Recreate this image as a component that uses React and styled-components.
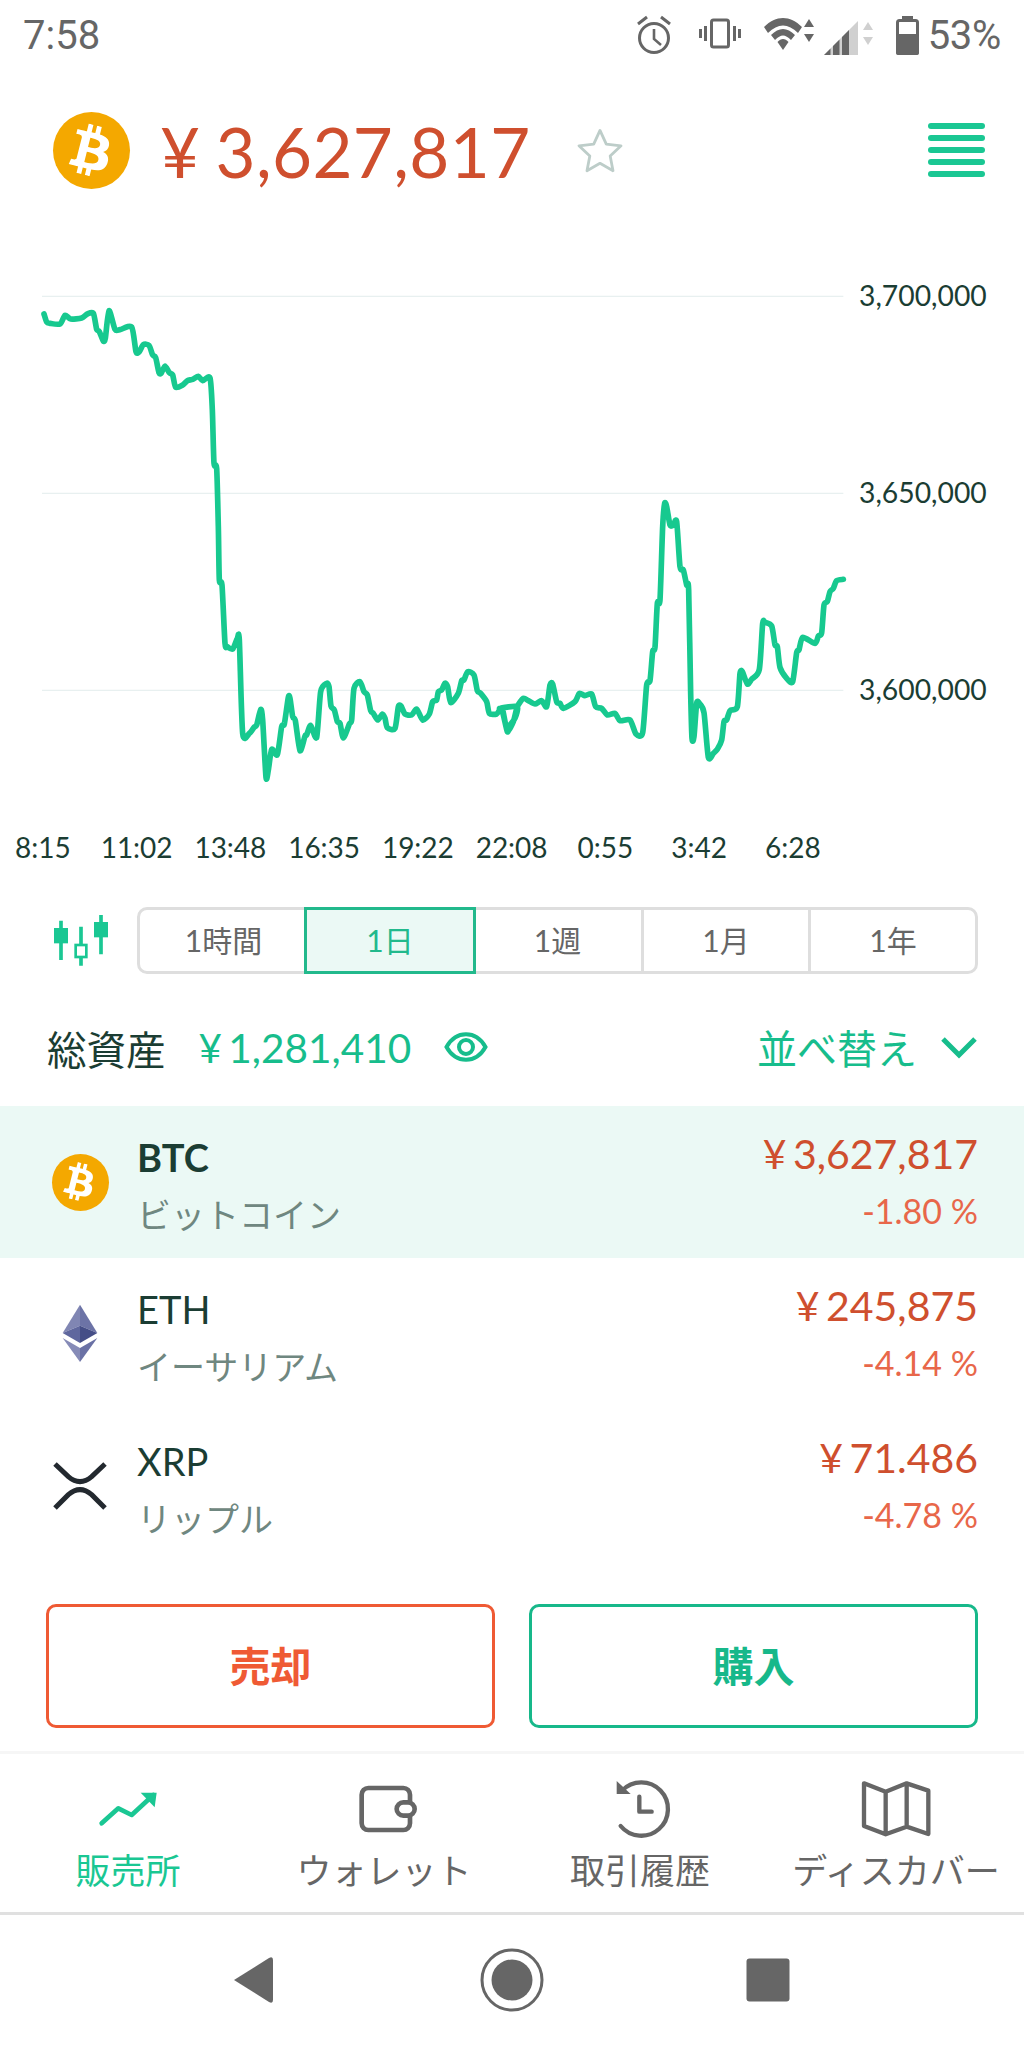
import React from 'react';
import styled, { createGlobalStyle } from 'styled-components';
import { FaBtc } from 'react-icons/fa';

const GREEN = '#1ac793';
const RED = '#cf4f2e';
const DARK = '#1b3d33';
const GREY = '#666666';
const CJK = `"Lato", "Noto Sans CJK JP", sans-serif`;

const Global = createGlobalStyle`
  html, body { margin: 0; padding: 0; background: #fff; }
  body { width: 1024px; height: 2048px; overflow: hidden; font-family: ${CJK}; color: ${DARK}; }
  * { box-sizing: border-box; }
`;

const Page = styled.div`width: 1024px; height: 2048px; display: flex; flex-direction: column;`;

const StatusBar = styled.div`height: 70px; display: flex; align-items: center; padding: 0 23px 0 23px; font-family: Roboto, sans-serif; color: ${GREY}; font-size: 40px;`;
const Clock = styled.span`margin-right: auto;`;
const StatusIcon = styled.svg`height: 50px; display: block; margin-top: -2px;`;
const StatusPct = styled.span`margin-left: 8px; letter-spacing: -0.3px;`;

const Header = styled.div`height: 160px; display: flex; align-items: center; padding: 0 39px 0 53px;`;
const BtcBadge = styled.span`
  width: ${p => p.$size}px; height: ${p => p.$size}px; border-radius: 50%; background: #f4a800; color: #fff;
  display: flex; align-items: center; justify-content: center; font-size: ${p => p.$size * 0.66}px; flex: none;
  svg { transform: rotate(14deg); }
`;
const HeadPrice = styled.div`margin: 3px 0 0 30px; font-size: 69px; color: ${RED}; line-height: 1; letter-spacing: 0.4px; word-spacing: -3px;`;
const Star = styled.svg`width: 52px; height: 52px; margin-left: 43px; margin-top: 2px;`;
const Burger = styled.div`margin-left: auto; width: 57px; display: flex; flex-direction: column; gap: 6px;`;
const BurgerBar = styled.span`height: 6px; border-radius: 3px; background: ${GREEN};`;

const ChartRow = styled.div`margin-top: 30px; height: 530px; display: flex;`;
const Plot = styled.svg`width: 848px; height: 530px; display: block; flex: none;`;
const YAxis = styled.div`margin-left: 11px; padding-top: 15px; display: flex; flex-direction: column; gap: 157px;`;
const YLabel = styled.div`height: 40px; line-height: 40px; font-size: 28.3px; color: ${DARK};`;

const Times = styled.div`margin: 37px 0 0 -4px; height: 40px; display: grid; grid-template-columns: repeat(9, 93.75px);`;
const Time = styled.div`text-align: center; line-height: 40px; font-size: 28px; color: ${DARK};`;

const RangeRow = styled.div`margin-top: 33px; height: 80px; display: flex; align-items: center; padding-left: 40px;`;
const Candle = styled.svg`width: 90px; height: 80px; flex: none;`;
const Segment = styled.div`margin-left: 7px; width: 841px; height: 67px; display: grid; grid-template-columns: repeat(5, 1fr); border: 3px solid #dedede; border-radius: 10px;`;
const Seg = styled.div`
  display: flex; align-items: center; justify-content: center; font-size: 30px; padding-bottom: 3px; color: ${p => p.$on ? '#22b98c' : GREY};
  background: ${p => p.$on ? '#ebf9f5' : 'transparent'};
  margin: ${p => p.$on ? '-3px -2px -3px -3px' : '0'};
  border: ${p => p.$on ? '3px solid #22b98c' : '0'};
  border-left: ${p => p.$on ? '3px solid #22b98c' : p.$first ? '0' : '3px solid #dedede'};
`;

const TotalRow = styled.div`margin-top: 37px; height: 60px; display: flex; align-items: center; padding: 0 46px 0 47px;`;
const TotalLabel = styled.div`font-size: 39.5px; color: ${DARK};`;
const TotalValue = styled.div`margin-left: 33px; font-size: 40.5px; color: #17bd8c; word-spacing: -4px;`;
const Eye = styled.svg`width: 44px; height: 40px; margin-left: 33px;`;
const Sort = styled.div`margin-left: auto; font-size: 40px; color: #17bd8c;`;
const Chevron = styled.svg`width: 38px; height: 24px; margin-left: 23px;`;

const List = styled.div`margin-top: 29px;`;
const Row = styled.div`height: 152px; display: flex; align-items: center; padding-right: 46px; background: ${p => p.$on ? '#ebf9f5' : '#fff'};`;
const IconCell = styled.div`width: 137px; padding-left: 40px; flex: none;`;
const IconBox = styled.div`width: 80px; display: flex; justify-content: center;`;
const CoinSvg = styled.svg`width: 80px; height: 80px; display: block;`;
const Names = styled.div`display: flex; flex-direction: column;`;
const Sym = styled.div`height: 58px; line-height: 58px; font-size: 38px; font-weight: ${p => p.$on ? 700 : 400}; color: ${DARK}; margin-top: 8px;`;
const Jp = styled.div`height: 58px; line-height: 58px; font-size: 34px; color: #6f8780;`;
const Prices = styled.div`margin-left: auto; text-align: right; display: flex; flex-direction: column;`;
const Price = styled.div`height: 58px; line-height: 58px; font-size: 41px; color: ${RED}; word-spacing: -4px;`;
const Pct = styled.div`height: 56px; line-height: 56px; font-size: 34px; color: #e8674a;`;

const Actions = styled.div`margin-top: 42px; display: grid; grid-template-columns: 449px 449px; gap: 34px; padding-left: 46px;`;
const Act = styled.div`
  height: 124px; border: 3px solid ${p => p.$c}; border-radius: 10px; color: ${p => p.$c};
  display: flex; align-items: center; justify-content: center; font-size: 41px; font-weight: 700; padding-bottom: 4px;
`;

const Tabs = styled.div`margin-top: 23px; height: 164px; border-top: 3px solid #f6f6f6; border-bottom: 3px solid #e0e0e0; display: grid; grid-template-columns: repeat(4, 256px);`;
const Tab = styled.div`display: flex; flex-direction: column; align-items: center; padding-top: 16px; color: ${p => p.$on ? GREEN : GREY};`;
const TabSvg = styled.svg`width: 76px; height: 70px; display: block; flex: none;`;
const TabLabel = styled.div`height: 60px; line-height: 60px; font-size: 35px; white-space: nowrap;`;

const Nav = styled.div`flex: 1; padding-bottom: 3px; display: grid; grid-template-columns: repeat(3, 256px); justify-content: center; align-items: center; justify-items: center;`;
const NavSvg = styled.svg`width: 70px; height: 70px; display: block;`;

const P2 = '132,162 140,186 150,190 180,192 195,166 212,177 245,174 262,162 280,160 290,208 298,215 310,243 316,235 327,152 345,208 360,209 395,201 408,275 418,275 430,254 447,256 458,285 467,293 477,338 484,339 495,318 508,338 518,345 527,382 548,375 562,362 578,358 595,349 608,362 630,354 637,450 642,610 650,625 655,800 658,960 666,975 675,1150 682,1160 698,1167 712,1135 718,1140 728,1420 748,1420 762,1402 770,1395 782,1348 788,1380 798,1552 805,1530 815,1468 832,1484 845,1400 853,1392 865,1312 870,1315 878,1370 886,1382 900,1472 915,1428 920,1425 932,1396 950,1432 962,1295 980,1270 987,1280 993,1338 1003,1350 1012,1385 1020,1390 1030,1434 1048,1392 1055,1380 1062,1285 1080,1265 1092,1295 1102,1305 1112,1352 1120,1360 1133,1380 1147,1362 1155,1375 1162,1403 1185,1405 1195,1340 1203,1338 1215,1362 1235,1365 1250,1347 1268,1380 1288,1362 1298,1325 1310,1320 1315,1295 1325,1290 1335,1270 1343,1280 1352,1328 1375,1300 1385,1262 1392,1260 1403,1235 1422,1245 1432,1292 1442,1300 1460,1325 1468,1360 1490,1362 1505,1347 1522,1415 1530,1395 1545,1375 1552,1340';
const P3 = '0,1345 8,1350 22,1412 40,1385 52,1340 70,1315 85,1322 105,1332 125,1322 140,1340 150,1275 158,1272 170,1325 180,1330 190,1345 225,1325 238,1300 255,1307 275,1302 287,1340 305,1345 322,1365 345,1360 360,1382 390,1380 408,1422 428,1418 440,1275 450,1262 458,1175 465,1162 472,1030 480,1020 488,800 494,730 500,740 510,795 520,795 530,785 540,920 550,930 560,975 566,990 572,1300 576,1435 582,1430 590,1330 598,1330 612,1358 625,1492 640,1480 652,1468 665,1440 672,1385 680,1380 690,1352 712,1340 720,1240 727,1235 742,1272 755,1258 778,1228 788,1090 795,1087 815,1098 825,1155 832,1160 840,1222 860,1255 878,1265 890,1178 897,1170 908,1132 945,1150 955,1128 965,1118 972,1035 982,1025 990,995 1000,985 1010,962 1030,958';
const parse = (s, dx) => s.split(' ').map(p => { const [x, y] = p.split(',').map(Number); return [x + dx, y]; });
const PTS = [...parse(P2, 0), ...parse(P3, 1500)];
// Catmull-Rom smoothing: the chart's line has soft corners at each sample
const LINE = PTS.reduce((d, pt, i) => {
  if (i === 0) return `M${pt[0]} ${pt[1]}`;
  const a = PTS[i - 2] || PTS[i - 1];
  const b = PTS[i - 1];
  const c = PTS[i + 1] || pt;
  const k = 0.12;
  const c1 = [b[0] + (pt[0] - a[0]) * k, b[1] + (pt[1] - a[1]) * k];
  const c2 = [pt[0] - (c[0] - b[0]) * k, pt[1] - (c[1] - b[1]) * k];
  return `${d}C${c1[0].toFixed(1)} ${c1[1].toFixed(1)} ${c2[0].toFixed(1)} ${c2[1].toFixed(1)} ${pt[0]} ${pt[1]}`;
}, '');

const Alarm = () => (
  <StatusIcon viewBox="0 0 40 50" style={{ width: 40 }}>
    <circle cx="20" cy="29" r="14.5" fill="none" stroke={GREY} strokeWidth="3" />
    <path d="M20 20v10l7 6" fill="none" stroke={GREY} strokeWidth="2.6" />
    <path d="M4 15l9-7M36 15l-9-7" stroke={GREY} strokeWidth="3" />
  </StatusIcon>
);
const Vibrate = () => (
  <StatusIcon viewBox="0 0 42 50" style={{ width: 42, marginLeft: 25 }}>
    <rect x="12.5" y="11" width="17" height="27" rx="2" fill="none" stroke={GREY} strokeWidth="3" />
    <path d="M6.5 17v15M1.5 20v9M35.5 17v15M40.5 20v9" stroke={GREY} strokeWidth="3" />
  </StatusIcon>
);
const Wifi = () => (
  <StatusIcon viewBox="0 0 54 50" style={{ width: 54, marginLeft: 21 }}>
    <path d="M2 18C14 6 28 6 40 18L36 24C26 14 16 14 6 24Z" fill={GREY} />
    <path d="M9 26C17 18 25 18 33 26L29 31C23 25 19 25 13 31Z" fill={GREY} />
    <path d="M15.500 33C19 29 23 29 26.500 33L21 41Z" fill={GREY} />
    <path d="M47 10l5 8h-10zM47 33l5-8h-10z" fill={GREY} />
  </StatusIcon>
);
const Signal = () => (
  <StatusIcon viewBox="0 0 52 50" style={{ width: 52, marginLeft: 7 }}>
    <path d="M1 46L35 12V46Z" fill="#d0d0d0" />
    <path d="M1 46L7.500 39.500V46ZM10 37L16.500 30.500V46H10ZM19 28L26 21V46H19Z" fill={GREY} />
    <path d="M45 13l5 8h-10zM45 36l5-8h-10z" fill="#d0d0d0" />
  </StatusIcon>
);
const Battery = () => (
  <StatusIcon viewBox="0 0 24 50" style={{ width: 24, marginLeft: 21 }}>
    <path d="M6 7h11v4h-11z" fill={GREY} />
    <rect x="1.500" y="11.500" width="20" height="33" rx="2" fill="none" stroke={GREY} strokeWidth="3" />
    <rect x="0" y="25" width="23" height="21" rx="2" fill={GREY} />
  </StatusIcon>
);

const Eth = () => (
  <CoinSvg viewBox="0 0 240 240">
    <path d="M120 32L68 117L120 95Z" fill="#8086b3" />
    <path d="M120 32L172 117L120 95Z" fill="#6c73a6" />
    <path d="M68 117L120 95V147Z" fill="#5f679e" />
    <path d="M172 117L120 95V147Z" fill="#454e87" />
    <path d="M68 132L120 162V204Z" fill="#868bb7" />
    <path d="M172 132L120 162V204Z" fill="#6a71a5" />
  </CoinSvg>
);
const Xrp = () => (
  <CoinSvg viewBox="0 0 240 240">
    <path d="M45 54L85 92Q120 122 155 92L195 54M45 186L85 146Q120 116 155 146L195 186" fill="none" stroke="#23292f" strokeWidth="15" />
  </CoinSvg>
);

const coins = [
  { sym: 'BTC', jp: 'ビットコイン', price: '¥ 3,627,817', pct: '-1.80 %', on: true, icon: <BtcBadge $size={57}><FaBtc /></BtcBadge> },
  { sym: 'ETH', jp: 'イーサリアム', price: '¥ 245,875', pct: '-4.14 %', icon: <Eth /> },
  { sym: 'XRP', jp: 'リップル', price: '¥ 71.486', pct: '-4.78 %', icon: <Xrp /> },
];
const times = ['8:15', '11:02', '13:48', '16:35', '19:22', '22:08', '0:55', '3:42', '6:28'];
const ranges = ['1時間', '1日', '1週', '1月', '1年'];

export default function App() {
  return (
    <Page>
      <Global />
      <StatusBar>
        <Clock>7:58</Clock>
        <Alarm /><Vibrate /><Wifi /><Signal /><Battery />
        <StatusPct>53%</StatusPct>
      </StatusBar>

      <Header>
        <BtcBadge $size={77}><FaBtc /></BtcBadge>
        <HeadPrice>¥ 3,627,817</HeadPrice>
        <Star viewBox="0 0 24 24"><path d="M12 2.500l2.900 6.300 6.800.8-5 4.700 1.300 6.800-6-3.400-6 3.400 1.300-6.800-5-4.700 6.800-.8z" fill="none" stroke="#bdcdc9" strokeWidth="1.300" strokeLinejoin="round" /></Star>
        <Burger>{[0, 1, 2, 3, 4].map(i => <BurgerBar key={i} />)}</Burger>
      </Header>

      <ChartRow>
        <Plot viewBox="0 0 2544 1590">
          {[109, 700, 1291].map(y => <line key={y} x1="126" x2="2530" y1={y} y2={y} stroke="#e8f0f0" strokeWidth="4" />)}
          <path d={LINE} fill="none" stroke="#17c98f" strokeWidth="17" strokeLinejoin="round" strokeLinecap="round" />
        </Plot>
        <YAxis>
          <YLabel>3,700,000</YLabel>
          <YLabel>3,650,000</YLabel>
          <YLabel>3,600,000</YLabel>
        </YAxis>
      </ChartRow>

      <Times>{times.map(t => <Time key={t}>{t}</Time>)}</Times>

      <RangeRow>
        <Candle viewBox="0 0 270 240">
          <path d="M63 62v118M123 80v117M183 45v118" stroke="#1ac793" strokeWidth="11" />
          <rect x="42" y="84" width="42" height="46" fill="#1ac793" />
          <rect x="107" y="135" width="32" height="36" fill="#fff" stroke="#1ac793" strokeWidth="8" />
          <rect x="162" y="66" width="42" height="46" fill="#1ac793" />
        </Candle>
        <Segment>
          {ranges.map((r, i) => <Seg key={r} $on={i === 1} $first={i === 0 || i === 2}>{r}</Seg>)}
        </Segment>
      </RangeRow>

      <TotalRow>
        <TotalLabel>総資産</TotalLabel>
        <TotalValue>¥ 1,281,410</TotalValue>
        <Eye viewBox="0 0 44 40">
          <path d="M2.500 20C12 3 32 3 41.500 20C32 37 12 37 2.500 20Z" fill="none" stroke="#17bd8c" strokeWidth="4" />
          <circle cx="22" cy="20" r="7" fill="none" stroke="#17bd8c" strokeWidth="4" />
        </Eye>
        <Sort>並べ替え</Sort>
        <Chevron viewBox="0 0 38 24"><path d="M3 4l16 16L35 4" fill="none" stroke="#17bd8c" strokeWidth="5" /></Chevron>
      </TotalRow>

      <List>
        {coins.map(c => (
          <Row key={c.sym} $on={c.on}>
            <IconCell><IconBox>{c.icon}</IconBox></IconCell>
            <Names>
              <Sym $on={c.on}>{c.sym}</Sym>
              <Jp>{c.jp}</Jp>
            </Names>
            <Prices>
              <Price>{c.price}</Price>
              <Pct>{c.pct}</Pct>
            </Prices>
          </Row>
        ))}
      </List>

      <Actions>
        <Act $c="#ef5a34">売却</Act>
        <Act $c="#17b88a">購入</Act>
      </Actions>

      <Tabs>
        <Tab $on>
          <TabSvg viewBox="0 0 228 210">
            <path d="M35 160L85 115L125 135L190 75" fill="none" stroke="#1ac793" strokeWidth="14" strokeLinecap="round" strokeLinejoin="round" />
            <path d="M152 68H200L194 112Z" fill="#1ac793" />
          </TabSvg>
          <TabLabel>販売所</TabLabel>
        </Tab>
        <Tab>
          <TabSvg viewBox="768 0 228 210">
            <rect x="815" y="54" width="145" height="126" rx="20" fill="none" stroke={GREY} strokeWidth="14" />
            <rect x="920" y="97" width="54" height="40" rx="20" fill="#fff" stroke={GREY} strokeWidth="14" />
          </TabSvg>
          <TabLabel>ウォレット</TabLabel>
        </Tab>
        <Tab>
          <TabSvg viewBox="6 0 228 210">
            <path d="M62 168A80 80 0 1 0 66 62" fill="none" stroke={GREY} strokeWidth="13" strokeLinecap="round" />
            <path d="M50 33L92 72H50Z" fill={GREY} />
            <path d="M118 80V125H155" fill="none" stroke={GREY} strokeWidth="13" strokeLinecap="round" strokeLinejoin="round" />
          </TabSvg>
          <TabLabel>取引履歴</TabLabel>
        </Tab>
        <Tab>
          <TabSvg viewBox="774 0 228 210">
            <path d="M792 40L857 65L920 40L985 62V192L920 170L857 193L792 168Z M857 65V193 M920 40V170" fill="none" stroke={GREY} strokeWidth="13" strokeLinejoin="round" />
          </TabSvg>
          <TabLabel>ディスカバー</TabLabel>
        </Tab>
      </Tabs>

      <Nav>
        <NavSvg viewBox="0 0 70 70"><path d="M13 35L48 13Q52 11 52 15V55Q52 59 48 57Z" fill={GREY} /></NavSvg>
        <NavSvg viewBox="0 0 70 70">
          <circle cx="35" cy="35" r="30" fill="none" stroke={GREY} strokeWidth="3" />
          <circle cx="35" cy="35" r="20.500" fill={GREY} />
        </NavSvg>
        <NavSvg viewBox="0 0 70 70"><rect x="13.500" y="13.500" width="43" height="43" rx="3" fill={GREY} /></NavSvg>
      </Nav>
    </Page>
  );
}
